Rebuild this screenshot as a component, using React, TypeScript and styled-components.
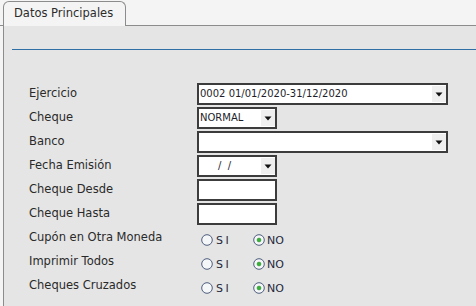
import React from "react";
import styled, { createGlobalStyle } from "styled-components";

const Global = createGlobalStyle`
  html, body { margin: 0; padding: 0; background: #f4f4f4; }
  body { font-family: "DejaVu Sans", Verdana, sans-serif; }
`;

const Page = styled.div`
  width: 476px;
  height: 306px;
  display: flex;
  flex-direction: column;
  overflow: hidden;
`;

const TabBar = styled.div`
  display: flex;
  padding: 1px 0 0 3px;
  height: 24px;
  border-bottom: 1px solid #8c8c8c;
`;

const Tab = styled.div`
  box-sizing: border-box;
  width: 123px;
  height: 25px;
  margin-bottom: -1px;
  border: 1px solid #8c8c8c;
  border-bottom: none;
  border-radius: 6px 6px 0 0;
  background: #f4f4f4;
  padding-left: 10px;
  font-size: 11.5px;
  line-height: 23px;
  color: #2c2c2c;
`;

const Panel = styled.div`
  flex: 1;
  margin-left: 3px;
  border-left: 1px solid #8c8c8c;
  background: #e5e5e5;
  display: flex;
  flex-direction: column;
`;

const Rule = styled.div`
  margin: 23px 0 0 8px;
  height: 1px;
  background: #2f6fa6;
`;

const Form = styled.div`
  margin: 33px 0 0 25px;
  display: grid;
  grid-template-columns: 168px auto;
  grid-auto-rows: 22px;
  row-gap: 2px;
  align-items: center;
`;

const Label = styled.div`
  font-size: 11.5px;
  color: #2a2a2a;
  line-height: 20px;
  padding-bottom: 2px;
`;

const Box = styled.div<{ $w: number }>`
  box-sizing: border-box;
  width: ${(p) => p.$w}px;
  height: 22px;
  border: 2px solid #3c3c3c;
  background: #fff;
  display: flex;
  align-items: stretch;
`;

const BoxText = styled.div<{ $pad?: number }>`
  flex: 1;
  padding-left: ${(p) => p.$pad ?? 1}px;
  font-size: 10px;
  line-height: 18px;
  color: #1e1e2a;
  white-space: pre;
  overflow: hidden;
`;

const Arrow = styled.div`
  width: 14px;
  margin: 1px 0;
  background: #efefef;
  display: flex;
  align-items: center;
  justify-content: center;
`;

const Radios = styled.div`
  display: flex;
  align-items: center;
  padding-left: 4px;
  padding-top: 4px;
`;

const Option = styled.label`
  display: flex;
  align-items: center;
  width: 52px;
  font-size: 11px;
  color: #24283c;
  gap: 2px;
`;

const SiText = styled.span`
  letter-spacing: 2.5px;
  margin-left: 1px;
`;

const Caret = () => (
  <svg width="8" height="5" viewBox="0 0 8 5">
    <polygon points="0.5,0.5 7.5,0.5 4,4.5" fill="#111" />
  </svg>
);

const RadioDot = ({ on }: { on?: boolean }) => (
  <svg width="12" height="12" viewBox="0 0 12 12">
    <circle cx="6" cy="6" r="5.3" fill="#f5f6f8" stroke="#4d5e7e" strokeWidth="1" />
    {on && <circle cx="6" cy="6" r="2" fill="#36b336" stroke="#1f7a1f" strokeWidth="0.4" />}
  </svg>
);

const Select = ({ w, text }: { w: number; text: string }) => (
  <Box $w={w}>
    <BoxText>{text}</BoxText>
    <Arrow>
      <Caret />
    </Arrow>
  </Box>
);

const YesNo = () => (
  <Radios>
    <Option>
      <RadioDot />
      <SiText>SI</SiText>
    </Option>
    <Option>
      <RadioDot on />
      <span>NO</span>
    </Option>
  </Radios>
);

export default function App() {
  return (
    <Page>
      <Global />
      <TabBar>
        <Tab>Datos Principales</Tab>
      </TabBar>
      <Panel>
        <Rule />
        <Form>
          <Label>Ejercicio</Label>
          <Select w={251} text="0002 01/01/2020-31/12/2020" />
          <Label>Cheque</Label>
          <Select w={80} text="NORMAL" />
          <Label>Banco</Label>
          <Select w={251} text="" />
          <Label>Fecha Emisión</Label>
          <Box $w={80}>
            <BoxText $pad={19}>{"/  /"}</BoxText>
            <Arrow>
              <Caret />
            </Arrow>
          </Box>
          <Label>Cheque Desde</Label>
          <Box $w={80} />
          <Label>Cheque Hasta</Label>
          <Box $w={80} />
          <Label>Cupón en Otra Moneda</Label>
          <YesNo />
          <Label>Imprimir Todos</Label>
          <YesNo />
          <Label>Cheques Cruzados</Label>
          <YesNo />
        </Form>
      </Panel>
    </Page>
  );
}
